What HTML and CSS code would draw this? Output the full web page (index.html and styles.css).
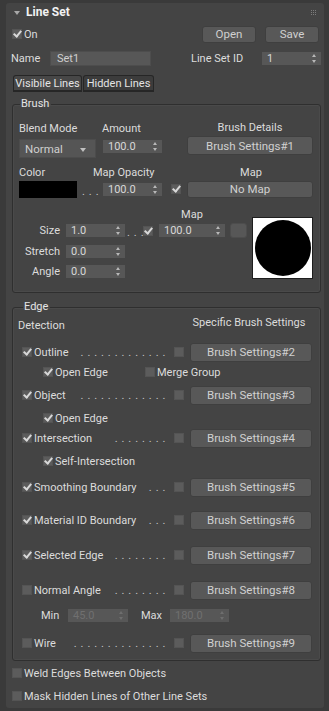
FILE: index.html
```html
<!DOCTYPE html>
<html lang="en">
<head>
    <meta charset="UTF-8">
    <meta name="viewport" content="width=device-width, initial-scale=1.0">
    <title>Line Set</title>
    <link rel="stylesheet" href="styles.css">
</head>
<body>

<div class="rollout">
    <div class="rollout-head">
        <span class="caret"></span>
        <span class="title">Line Set</span>
        <svg class="grip" width="5" height="5" viewBox="0 0 5 5">
            <g fill="#7c7c7c">
                <rect x="0" y="0" width="1" height="1"/><rect x="2" y="0" width="1" height="1"/><rect x="4" y="0" width="1" height="1"/>
                <rect x="0" y="2" width="1" height="1"/><rect x="2" y="2" width="1" height="1"/><rect x="4" y="2" width="1" height="1"/>
                <rect x="0" y="4" width="1" height="1"/><rect x="2" y="4" width="1" height="1"/><rect x="4" y="4" width="1" height="1"/>
            </g>
        </svg>
    </div>

    <div class="row row-top">
        <span class="chk on"></span><span class="chk-text">On</span>
        <button class="btn btn-file open-btn">Open</button>
        <button class="btn btn-file">Save</button>
    </div>

    <div class="row row-name">
        <span class="lbl name-lbl">Name</span>
        <span class="text-field">Set1</span>
        <span class="lbl id-lbl">Line Set ID</span>
        <span class="spinner id-spin">1</span>
    </div>

    <div class="tabs">
        <span class="tab active">Visibile Lines</span>
        <span class="tab">Hidden Lines</span>
    </div>

    <fieldset class="group brush-group">
        <legend>Brush</legend>

        <div class="row labels-a">
            <span class="lbl col-blend">Blend Mode</span>
            <span class="lbl col-amount">Amount</span>
            <span class="lbl col-wide">Brush Details</span>
        </div>
        <div class="row row-b">
            <span class="dropdown">Normal</span>
            <span class="spinner spin-amount">100.0</span>
            <button class="btn btn-wide">Brush Settings#1</button>
        </div>

        <div class="row labels-c">
            <span class="lbl col-color">Color</span>
            <span class="lbl col-opacity">Map Opacity</span>
            <span class="lbl col-wide">Map</span>
        </div>
        <div class="row row-d">
            <span class="swatch"></span>
            <span class="dots swatch-dots">. . .</span>
            <span class="spinner spin-amount">100.0</span>
            <span class="chk on opacity-chk"></span>
            <button class="btn btn-wide btn-short">No Map</button>
        </div>

        <div class="size-block">
            <div class="size-rows">
                <div class="map-lbl">Map</div>
                <div class="row size-row">
                    <span class="lbl side-lbl">Size</span>
                    <span class="spinner spin-size">1.0</span>
                    <span class="dots size-dots">. . .</span>
                    <span class="chk on"></span>
                    <span class="spinner spin-map">100.0</span>
                    <span class="map-slot"></span>
                </div>
                <div class="row side-row">
                    <span class="lbl side-lbl">Stretch</span>
                    <span class="spinner spin-size">0.0</span>
                </div>
                <div class="row side-row">
                    <span class="lbl side-lbl">Angle</span>
                    <span class="spinner spin-size">0.0</span>
                </div>
            </div>
            <div class="preview"><span class="stroke-dot"></span></div>
        </div>
    </fieldset>

    <fieldset class="group edge-group">
        <legend>Edge</legend>

        <div class="row edge-head">
            <span class="lbl detect-lbl">Detection</span>
            <span class="lbl specific-lbl">Specific Brush Settings</span>
        </div>

        <div class="row edge-row first">
            <span class="edge-main"><span class="chk on"></span><span class="chk-text">Outline</span><span class="dots">. . . . . . . . . . . . .</span></span>
            <span class="chk side-chk"></span>
            <button class="btn btn-edge">Brush Settings#2</button>
        </div>
        <div class="row sub-row">
            <span class="chk on"></span><span class="chk-text open-edge">Open Edge</span>
            <span class="chk"></span><span class="chk-text">Merge Group</span>
        </div>

        <div class="row edge-row gap-3">
            <span class="edge-main"><span class="chk on"></span><span class="chk-text">Object</span><span class="dots">. . . . . . . . . . . . .</span></span>
            <span class="chk side-chk"></span>
            <button class="btn btn-edge">Brush Settings#3</button>
        </div>
        <div class="row sub-row gap-3">
            <span class="chk on"></span><span class="chk-text">Open Edge</span>
        </div>

        <div class="row edge-row">
            <span class="edge-main"><span class="chk on"></span><span class="chk-text">Intersection</span><span class="dots">. . . . . . . .</span></span>
            <span class="chk side-chk"></span>
            <button class="btn btn-edge">Brush Settings#4</button>
        </div>
        <div class="row sub-row gap-3">
            <span class="chk on"></span><span class="chk-text">Self-Intersection</span>
        </div>

        <div class="row edge-row gap-6">
            <span class="edge-main"><span class="chk on"></span><span class="chk-text">Smoothing Boundary</span><span class="dots">. . .</span></span>
            <span class="chk side-chk"></span>
            <button class="btn btn-edge">Brush Settings#5</button>
        </div>

        <div class="row edge-row gap-13">
            <span class="edge-main"><span class="chk on"></span><span class="chk-text">Material ID Boundary</span><span class="dots">. . .</span></span>
            <span class="chk side-chk"></span>
            <button class="btn btn-edge">Brush Settings#6</button>
        </div>

        <div class="row edge-row gap-15">
            <span class="edge-main"><span class="chk on"></span><span class="chk-text">Selected Edge</span><span class="dots">. . . . . . . .</span></span>
            <span class="chk side-chk"></span>
            <button class="btn btn-edge">Brush Settings#7</button>
        </div>

        <div class="row edge-row gap-15">
            <span class="edge-main"><span class="chk"></span><span class="chk-text">Normal Angle</span><span class="dots">. . . . . . . .</span></span>
            <span class="chk side-chk"></span>
            <button class="btn btn-edge">Brush Settings#8</button>
        </div>
        <div class="row minmax-row">
            <span class="lbl min-lbl">Min</span>
            <span class="spinner disabled spin-min">45.0</span>
            <span class="lbl max-lbl">Max</span>
            <span class="spinner disabled spin-max">180.0</span>
        </div>

        <div class="row edge-row gap-8">
            <span class="edge-main"><span class="chk"></span><span class="chk-text">Wire</span><span class="dots">. . . . . . . . . . . . . .</span></span>
            <span class="chk side-chk"></span>
            <button class="btn btn-edge">Brush Settings#9</button>
        </div>
    </fieldset>

    <div class="row bottom-row weld-row">
        <span class="chk"></span><span class="chk-text">Weld Edges Between Objects</span>
    </div>
    <div class="row bottom-row mask-row">
        <span class="chk"></span><span class="chk-text">Mask Hidden Lines of Other Line Sets</span>
    </div>
</div>

</body>
</html>
```

FILE: styles.css
```css
/* 3ds Max style dark rollout */
body {
    margin: 0;
    background: #3a3a3a;
    font-family: 'Roboto', 'Liberation Sans', sans-serif;
    font-size: 11px;
    color: #dcdcdc;
}

.rollout {
    box-sizing: border-box;
    width: 318px;
    height: 705px;
    margin: 3px 0 0 6px;
    padding: 0 0 0 6px;
    background: #444444;
    border-radius: 3px;
}

.rollout-head {
    display: flex;
    align-items: center;
    height: 18px;
}

.caret {
    width: 0;
    height: 0;
    margin: 1px 6px 0 2px;
    border-left: 3px solid transparent;
    border-right: 3px solid transparent;
    border-top: 4px solid #a8a8a8;
}

.title {
    font-weight: bold;
    font-size: 12px;
    color: #f2f2f2;
}

.grip {
    margin: 0 8px 0 auto;
}

.row {
    display: flex;
    align-items: center;
}

.lbl {
    white-space: nowrap;
}

/* checkboxes */
.chk {
    position: relative;
    flex: none;
    width: 10px;
    height: 10px;
    background: #5c5c5c;
    box-shadow: inset 0 0 0 1px #545454;
}

.chk.on::after {
    content: '';
    position: absolute;
    left: 3px;
    top: 0;
    width: 3px;
    height: 6px;
    border: solid #d8d8d8;
    border-width: 0 2px 2px 0;
    transform: rotate(40deg);
}

.chk-text {
    margin-left: 2px;
    white-space: nowrap;
}

/* buttons */
.btn {
    box-sizing: border-box;
    height: 19px;
    padding: 0;
    border: 1px solid #3f3f3f;
    border-radius: 3px;
    background: #585858;
    color: #d0d0d0;
    font-family: inherit;
    font-size: 11.5px;
}

.row-top {
    height: 16px;
    margin-top: 5px;
}

.btn-file {
    width: 54px;
    height: 17px;
    margin-left: 9px;
}

.open-btn {
    margin-left: auto;
}

.row-top .btn-file:last-child {
    margin-right: 5px;
}

/* text field and spinners */
.row-name {
    height: 16px;
    margin-top: 8px;
}

.name-lbl {
    width: 39px;
    margin-left: -1px;
}

.text-field {
    box-sizing: border-box;
    width: 101px;
    height: 15px;
    padding: 0 6px;
    line-height: 13px;
    background: #575757;
    border: 1px solid #4d4d4d;
    color: #cfcfcf;
}

.id-lbl {
    width: 71px;
    margin-left: 40px;
}

.spinner {
    position: relative;
    box-sizing: border-box;
    flex: none;
    height: 13px;
    padding-left: 5px;
    line-height: 13px;
    background: #575757;
    color: #d8d8d8;
}

.spinner::before,
.spinner::after {
    content: '';
    position: absolute;
    right: 5px;
    width: 0;
    height: 0;
    border-left: 2.5px solid transparent;
    border-right: 2.5px solid transparent;
}

.spinner::before {
    top: 2px;
    border-bottom: 3px solid #b8b8b8;
}

.spinner::after {
    bottom: 2px;
    border-top: 3px solid #b8b8b8;
}

.spinner.disabled {
    color: #707070;
}

.spinner.disabled::before {
    border-bottom-color: #6e6e6e;
}

.spinner.disabled::after {
    border-top-color: #6e6e6e;
}

.id-spin {
    width: 59px;
}

/* tabs */
.tabs {
    display: flex;
    margin: 9px 0 0 1px;
    height: 17px;
}

.tab {
    box-sizing: border-box;
    height: 17px;
    padding: 0;
    line-height: 15px;
    text-align: center;
    white-space: nowrap;
    border: 1px solid #262626;
    border-bottom-width: 2px;
    border-radius: 3px 3px 0 0;
    background: #3c3c3c;
    color: #e4e4e4;
    font-size: 11px;
}

.tab.active {
    width: 69px;
    background: #474747;
}

.tab + .tab {
    width: 71px;
    margin-left: 1px;
}

/* group frames */
.group {
    box-sizing: border-box;
    width: 309px;
    margin: 0;
    padding: 0 0 0 6px;
    border: 1px solid #2f2f2f;
    border-radius: 3px;
    box-shadow: inset 0 0 0 1px #4a4a4a;
}

.group legend {
    margin-left: 1px;
    padding: 0 2px 0 1px;
    line-height: 14px;
    color: #e4e4e4;
}

.brush-group {
    margin-top: 5px;
    height: 196px;
}

.labels-a {
    height: 14px;
    margin-top: 10px;
}

.col-blend,
.col-amount {
    width: 84px;
}

.col-amount {
    margin-left: -1px;
}

.col-wide {
    width: 126px;
    text-align: center;
    margin-left: 1px;
}

.labels-a .col-wide {
    margin-top: -2px;
}

.row-b {
    height: 22px;
    margin-top: 1px;
    align-items: flex-start;
}

.dropdown {
    position: relative;
    box-sizing: border-box;
    width: 77px;
    height: 19px;
    margin-top: 3px;
    padding-left: 5px;
    line-height: 19px;
    background: #555555;
    border: 1px solid #4c4c4c;
    color: #cfcfcf;
    font-size: 11.5px;
}

.dropdown::after {
    content: '';
    position: absolute;
    right: 9px;
    top: 8px;
    border-left: 3px solid transparent;
    border-right: 3px solid transparent;
    border-top: 4px solid #c0c0c0;
}

.spin-amount {
    width: 59px;
    margin-left: 7px;
    margin-top: 4px;
}

.btn-wide {
    width: 126px;
    margin-left: 25px;
}

.labels-c {
    height: 14px;
    margin-top: 7px;
}

.col-color {
    width: 74px;
}

.col-opacity {
    width: 94px;
}

.row-d {
    height: 18px;
    margin-top: 1px;
}

.swatch {
    width: 58px;
    height: 17px;
    background: #000;
}

.dots {
    color: #c8c8c8;
    white-space: nowrap;
    letter-spacing: 0.6px;
}

.swatch-dots {
    width: 26px;
    align-self: flex-end;
    padding-left: 5px;
    box-sizing: border-box;
    line-height: 12px;
}

.row-d .spin-amount {
    margin: 0;
}

.opacity-chk {
    margin: 0 0 0 9px;
}

.row-d .btn-wide {
    height: 17px;
    margin-left: 6px;
}

/* size / stretch / angle with preview */
.size-block {
    display: flex;
    margin-top: 10px;
}

.size-rows {
    width: 233px;
}

.map-lbl {
    width: 66px;
    margin-left: 140px;
    text-align: center;
    line-height: 14px;
}

.size-row {
    height: 15px;
    margin-top: 1px;
}

.side-lbl {
    box-sizing: border-box;
    width: 47px;
    padding-right: 6px;
    text-align: right;
}

.spin-size {
    width: 59px;
}

.size-dots {
    width: 18px;
    box-sizing: border-box;
    padding-left: 2px;
    align-self: flex-end;
    line-height: 10px;
}

.spin-map {
    width: 66px;
    margin-left: 6px;
}

.map-slot {
    box-sizing: border-box;
    width: 17px;
    height: 15px;
    margin-left: 5px;
    background: #575757;
    border: 1px solid #4d4d4d;
    border-radius: 3px;
}

.side-row {
    height: 14px;
    margin-top: 6px;
}

.preview {
    box-sizing: border-box;
    display: flex;
    align-items: center;
    justify-content: center;
    width: 61px;
    height: 62px;
    margin-top: 9px;
    background: #fff;
    border: 1px solid #1e1e1e;
}

.stroke-dot {
    width: 56px;
    height: 56px;
    border-radius: 50%;
    background: #000;
}

/* edge group */
.edge-group {
    margin-top: 7px;
    height: 361px;
    padding-left: 9px;
}

.edge-head {
    height: 14px;
    margin-top: 4px;
}

.detect-lbl {
    width: 168px;
    margin-left: -4px;
}

.specific-lbl {
    width: 126px;
    margin-top: -6px;
    text-align: center;
}

.edge-row {
    height: 20px;
}

.edge-row.first {
    margin-top: 10px;
}

.edge-main {
    display: flex;
    align-items: center;
    width: 144px;
}

.edge-main .dots {
    flex: 1;
    text-align: right;
    align-self: flex-end;
    line-height: 12px;
    overflow: hidden;
}

.side-chk {
    margin-left: 8px;
}

.btn-edge {
    width: 122px;
    margin-left: 6px;
}

.sub-row {
    height: 20px;
    padding-left: 21px;
}

.open-edge {
    width: 90px;
}

.gap-3 { margin-top: 3px; }
.gap-6 { margin-top: 6px; }
.gap-8 { margin-top: 8px; }
.gap-13 { margin-top: 13px; }
.gap-15 { margin-top: 15px; }

.minmax-row {
    height: 20px;
    margin-top: 5px;
}

.min-lbl {
    width: 27px;
    margin-left: 19px;
}

.spin-min {
    width: 60px;
}

.max-lbl {
    width: 29px;
    margin-left: 13px;
}

.spin-max {
    width: 59px;
}

/* bottom options */
.bottom-row {
    height: 14px;
}

.weld-row {
    margin-top: 5px;
}

.mask-row {
    margin-top: 9px;
}
```
